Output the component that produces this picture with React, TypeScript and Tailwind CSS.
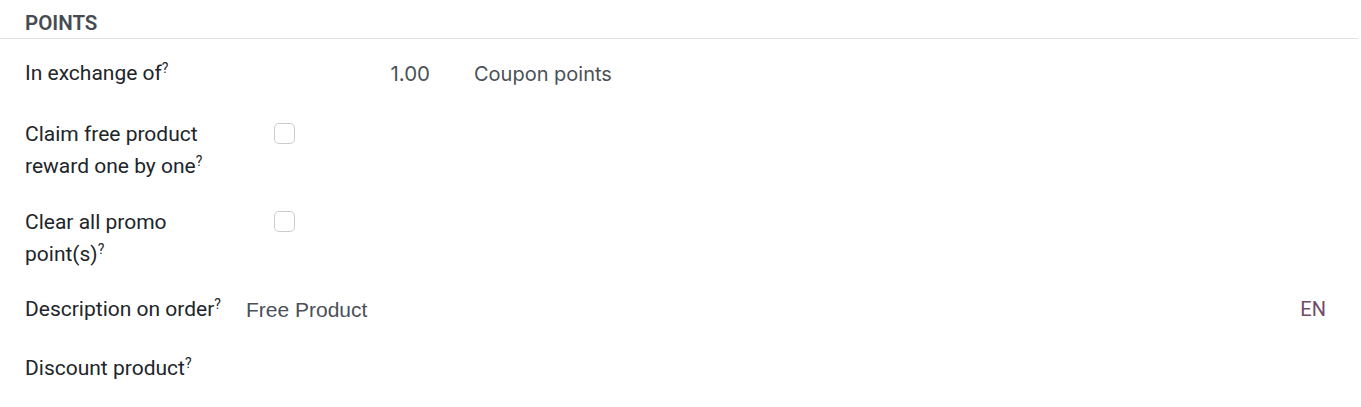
import React from "react";

function Help() {
  return <sup className="text-[14px] text-[#212529]">?</sup>;
}

function Label({ children }: { children: React.ReactNode }) {
  return (
    <div className="w-[205px] shrink-0 mr-[15px] text-[21px] leading-[32px] text-[#212529]">
      {children}
      <Help />
    </div>
  );
}

function Checkbox() {
  return (
    <div className="mt-[5px] ml-[29px] h-[21px] w-[21px] rounded-[5px] border border-[#c9cbcf] bg-white" />
  );
}

export default function App() {
  return (
    <div className="h-[407px] w-[1361px] overflow-hidden bg-white font-[Roboto,sans-serif]">
      <div className="mr-[3px] border-b border-[#dfe1e4] pb-[3px] pl-[25px] pt-[11px] text-[20.5px] font-semibold leading-[24px] text-[#464b52]">
        POINTS
      </div>

      <div className="pl-[25px] pr-[35px] pt-[18px]">
        <div className="mb-[28px] flex items-start">
          <Label>In exchange of</Label>
          <div className="w-[185px] pt-[1px] text-right font-[Inter,sans-serif] text-[20.5px] leading-[32px] text-[#4b5058]">
            1.00
          </div>
          <div className="ml-[44px] pt-[1px] font-[Inter,sans-serif] text-[20px] leading-[32px] text-[#4b5058]">
            Coupon points
          </div>
        </div>

        <div className="mb-[24px] flex items-start">
          <Label>Claim free product reward one by one</Label>
          <Checkbox />
        </div>

        <div className="mb-[23px] flex items-start">
          <Label>Clear all promo point(s)</Label>
          <Checkbox />
        </div>

        <div className="mb-[26px] flex items-start">
          <Label>Description on order</Label>
          <div className="flex flex-1 items-start pl-[1px] pt-[1px]">
            <div className="flex-1 font-['Liberation_Sans',Arial,sans-serif] text-[21px] leading-[32px] text-[#4b5058]">
              Free Product
            </div>
            <div className="text-[20px] leading-[31px] text-[#714b67]">EN</div>
          </div>
        </div>

        <div className="flex items-start">
          <Label>Discount product</Label>
        </div>
      </div>
    </div>
  );
}
